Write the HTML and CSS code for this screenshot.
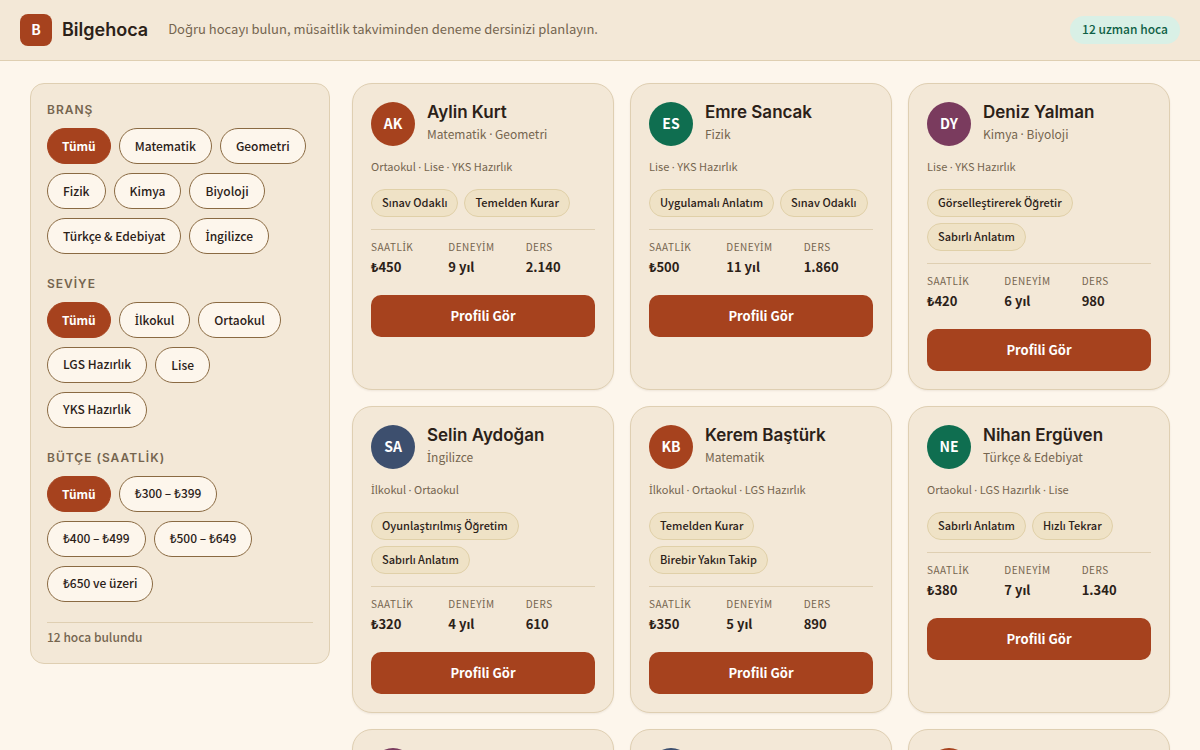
FILE: index.html
```html
<!DOCTYPE html>
<html lang="tr">
    <head>
        <meta charset="UTF-8" />
        <meta name="viewport" content="width=device-width, initial-scale=1.0" />
        <title>Bilgehoca</title>
        <link rel="stylesheet" href="styles.css">
    </head>

    <body>
        <header class="topbar">
            <div class="logo">B</div>
            <h1 class="brand">Bilgehoca</h1>
            <p class="slogan">Doğru hocayı bulun, müsaitlik takviminden deneme dersinizi planlayın.</p>
            <span class="total">12 uzman hoca</span>
        </header>

        <main class="layout">
            <aside class="filters">
                <section class="group">
                    <h2 class="group-title">BRANŞ</h2>
                    <div class="chips">
                        <button type="button" class="chip active">Tümü</button>
                        <button type="button" class="chip">Matematik</button>
                        <button type="button" class="chip">Geometri</button>
                        <button type="button" class="chip">Fizik</button>
                        <button type="button" class="chip">Kimya</button>
                        <button type="button" class="chip">Biyoloji</button>
                        <button type="button" class="chip">Türkçe &amp; Edebiyat</button>
                        <button type="button" class="chip"><span class="glyph">İ</span>ngilizce</button>
                    </div>
                </section>
                <section class="group">
                    <h2 class="group-title">SEVİYE</h2>
                    <div class="chips">
                        <button type="button" class="chip active">Tümü</button>
                        <button type="button" class="chip"><span class="glyph">İ</span>lkokul</button>
                        <button type="button" class="chip">Ortaokul</button>
                        <button type="button" class="chip">LGS Hazırlık</button>
                        <button type="button" class="chip">Lise</button>
                        <button type="button" class="chip">YKS Hazırlık</button>
                    </div>
                </section>
                <section class="group">
                    <h2 class="group-title">BÜTÇE (SAATLİK)</h2>
                    <div class="chips">
                        <button type="button" class="chip active">Tümü</button>
                        <button type="button" class="chip">₺300 – ₺399</button>
                        <button type="button" class="chip">₺400 – ₺499</button>
                        <button type="button" class="chip">₺500 – ₺649</button>
                        <button type="button" class="chip">₺650 ve üzeri</button>
                    </div>
                </section>
                <p class="found">12 hoca bulundu</p>
            </aside>

            <section class="cards" id="cardList"></section>
        </main>

        <script>
            var teachers = [
                { name: 'Aylin Kurt', initials: 'AK', color: 'rust', subject: 'Matematik · Geometri', level: 'Ortaokul · Lise · YKS Hazırlık', tags: ['Sınav Odaklı', 'Temelden Kurar'], price: '₺450', years: '9 yıl', lessons: '2.140' },
                { name: 'Emre Sancak', initials: 'ES', color: 'green', subject: 'Fizik', level: 'Lise · YKS Hazırlık', tags: ['Uygulamalı Anlatım', 'Sınav Odaklı'], price: '₺500', years: '11 yıl', lessons: '1.860' },
                { name: 'Deniz Yalman', initials: 'DY', color: 'plum', subject: 'Kimya · Biyoloji', level: 'Lise · YKS Hazırlık', tags: ['Görselleştirerek Öğretir', 'Sabırlı Anlatım'], price: '₺420', years: '6 yıl', lessons: '980' },
                { name: 'Selin Aydoğan', initials: 'SA', color: 'navy', subject: 'İngilizce', level: 'İlkokul · Ortaokul', tags: ['Oyunlaştırılmış Öğretim', 'Sabırlı Anlatım'], price: '₺320', years: '4 yıl', lessons: '610' },
                { name: 'Kerem Baştürk', initials: 'KB', color: 'rust', subject: 'Matematik', level: 'İlkokul · Ortaokul · LGS Hazırlık', tags: ['Temelden Kurar', 'Birebir Yakın Takip'], price: '₺350', years: '5 yıl', lessons: '890' },
                { name: 'Nihan Ergüven', initials: 'NE', color: 'green', subject: 'Türkçe & Edebiyat', level: 'Ortaokul · LGS Hazırlık · Lise', tags: ['Sabırlı Anlatım', 'Hızlı Tekrar'], price: '₺380', years: '7 yıl', lessons: '1.340' },
                { name: 'Baran Tekin', initials: 'BT', color: 'plum', subject: 'Geometri', level: 'Lise · YKS Hazırlık', tags: ['Sınav Odaklı', 'Hızlı Tekrar'], price: '₺550', years: '12 yıl', lessons: '2.480' },
                { name: 'Ceren Uysal', initials: 'CU', color: 'navy', subject: 'Biyoloji', level: 'Lise · YKS Hazırlık', tags: ['Sabırlı Anlatım', 'Hızlı Tekrar'], price: '₺400', years: '6 yıl', lessons: '1.020' },
                { name: 'Mert Aksoy', initials: 'MA', color: 'rust', subject: 'Fizik · Matematik', level: 'Lise · YKS Hazırlık', tags: ['Temelden Kurar', 'Sınav Odaklı'], price: '₺650', years: '14 yıl', lessons: '3.150' }
            ];

            for (let i = 0; i < teachers.length; i++) {
                var t = teachers[i];
                var card = document.createElement('article');
                var tags = t.tags.map(tag => `<li class="tag">${tag}</li>`).join('');

                card.setAttribute('class', 'card');
                card.innerHTML = `<div class="head">
                        <div class="avatar ${t.color}">${t.initials}</div>
                        <div class="who">
                            <h3 class="name">${t.name}</h3>
                            <p class="subject">${glyphs(t.subject)}</p>
                        </div>
                    </div>
                    <p class="level">${glyphs(t.level)}</p>
                    <ul class="tags">${tags}</ul>
                    <dl class="stats">
                        <div><dt>${glyphs('SAATLİK')}</dt><dd>${t.price}</dd></div>
                        <div><dt>${glyphs('DENEYİM')}</dt><dd>${t.years}</dd></div>
                        <div><dt>DERS</dt><dd>${t.lessons}</dd></div>
                    </dl>
                    <button type="button" class="profile">Profili Gör</button>`;

                document.getElementById('cardList').appendChild(card);
            }

            // the text font has no İ and a full-width middle dot
            function glyphs(text) {
                return text.replace('&', '&amp;').replace(/[İ·]/g, '<span class="glyph">$&</span>');
            }
        </script>
    </body>
</html>
```
FILE: styles.css
```css
* {
    margin: 0;
    padding: 0;
    box-sizing: border-box;
}

body {
    font-family: "Noto Sans CJK SC", "Noto Sans", sans-serif;
    font-size: 13px;
    line-height: 20px;
    color: #2b2118;
    background: #fdf6ec;
}

button {
    font-family: inherit;
    cursor: pointer;
}

li {
    list-style-type: none;
}

.glyph {
    font-family: "Noto Sans", sans-serif;
    line-height: 1;
}

.topbar {
    display: flex;
    align-items: center;
    padding: 14px 20px;
    background: #f3e8d7;
    border-bottom: 1px solid #dfcfb2;
}

.logo {
    width: 32px;
    height: 32px;
    line-height: 31px;
    border-radius: 8px;
    background: #a6421e;
    color: #fff;
    font-size: 14px;
    font-weight: 700;
    text-align: center;
}

.brand {
    margin-left: 10px;
    font-family: Inter, sans-serif;
    font-size: 18px;
    font-weight: 600;
}

.slogan {
    margin-left: 20px;
    padding-bottom: 2px;
    color: #75654f;
}

.total {
    margin-left: auto;
    padding: 3px 12px 5px;
    border-radius: 14px;
    background: #d9f0e6;
    color: #0f5f45;
    font-size: 12px;
    font-weight: 500;
}

.layout {
    display: grid;
    grid-template-columns: 300px 1fr;
    gap: 22px;
    align-items: start;
    padding: 22px 30px;
}

.filters {
    padding: 16px;
    background: #f3e8d7;
    border: 1px solid #dfcfb2;
    border-radius: 14px;
}

.group {
    margin-bottom: 20px;
}

.group-title {
    margin-bottom: 8px;
    font-family: Inter, sans-serif;
    font-size: 12px;
    font-weight: 600;
    line-height: 20px;
    letter-spacing: 1px;
    color: #75654f;
}

.chips {
    display: flex;
    flex-wrap: wrap;
    gap: 9px 8px;
}

.chip {
    height: 36px;
    padding: 0 15px 2px;
    border: 1px solid #8a6a42;
    border-radius: 18px;
    background: #fdf6ec;
    color: #2b2118;
    font-size: 12px;
    font-weight: 500;
}

.chip.active {
    padding: 0 14px 2px;
    border-color: #a6421e;
    background: #a6421e;
    color: #fff;
    font-weight: 700;
}

.found {
    padding-top: 4px;
    border-top: 1px solid #dfcfb2;
    color: #75654f;
    font-size: 12px;
    font-weight: 500;
}

.cards {
    display: grid;
    grid-template-columns: repeat(3, 1fr);
    gap: 16px;
    align-items: stretch;
}

.card {
    padding: 18px;
    background: #f3e8d7;
    border: 1px solid #dfcfb2;
    border-radius: 20px;
    box-shadow: 0 1px 2px rgba(60, 40, 10, 0.08);
}

.head {
    display: flex;
    gap: 12px;
    height: 44px;
}

.avatar {
    width: 44px;
    height: 44px;
    line-height: 42px;
    border-radius: 50%;
    color: #fff;
    font-size: 14px;
    font-weight: 700;
    text-align: center;
}

.avatar.rust {
    background: #a6421e;
}

.avatar.green {
    background: #0f6e50;
}

.avatar.plum {
    background: #7a3b5e;
}

.avatar.navy {
    background: #3d4f6e;
}

.name {
    font-family: Inter, sans-serif;
    font-size: 17px;
    font-weight: 600;
    line-height: 20px;
}

.subject {
    margin-top: 2px;
    color: #75654f;
    font-size: 12px;
}

.level {
    margin-top: 11px;
    color: #75654f;
    font-size: 11px;
    line-height: 19px;
}

.tags {
    display: flex;
    flex-wrap: wrap;
    gap: 6px;
    margin-top: 13px;
}

.tag {
    padding: 2px 10px 4px;
    border: 1px solid #e0d0a8;
    border-radius: 14px;
    background: #efe2c6;
    font-size: 11px;
    font-weight: 500;
}

.stats {
    display: grid;
    grid-template-columns: repeat(3, 1fr);
    gap: 8px;
    margin-top: 12px;
    padding-top: 10px;
    border-top: 1px solid #dfcfb2;
}

.stats dt {
    color: #75654f;
    font-size: 10px;
    line-height: 14px;
    letter-spacing: 0.5px;
}

.stats dd {
    margin-top: 3px;
    font-weight: 700;
}

.profile {
    width: 100%;
    height: 42px;
    margin-top: 18px;
    padding-bottom: 2px;
    border: 0;
    border-radius: 10px;
    background: #a6421e;
    color: #fff;
    font-size: 13px;
    font-weight: 700;
}
```
